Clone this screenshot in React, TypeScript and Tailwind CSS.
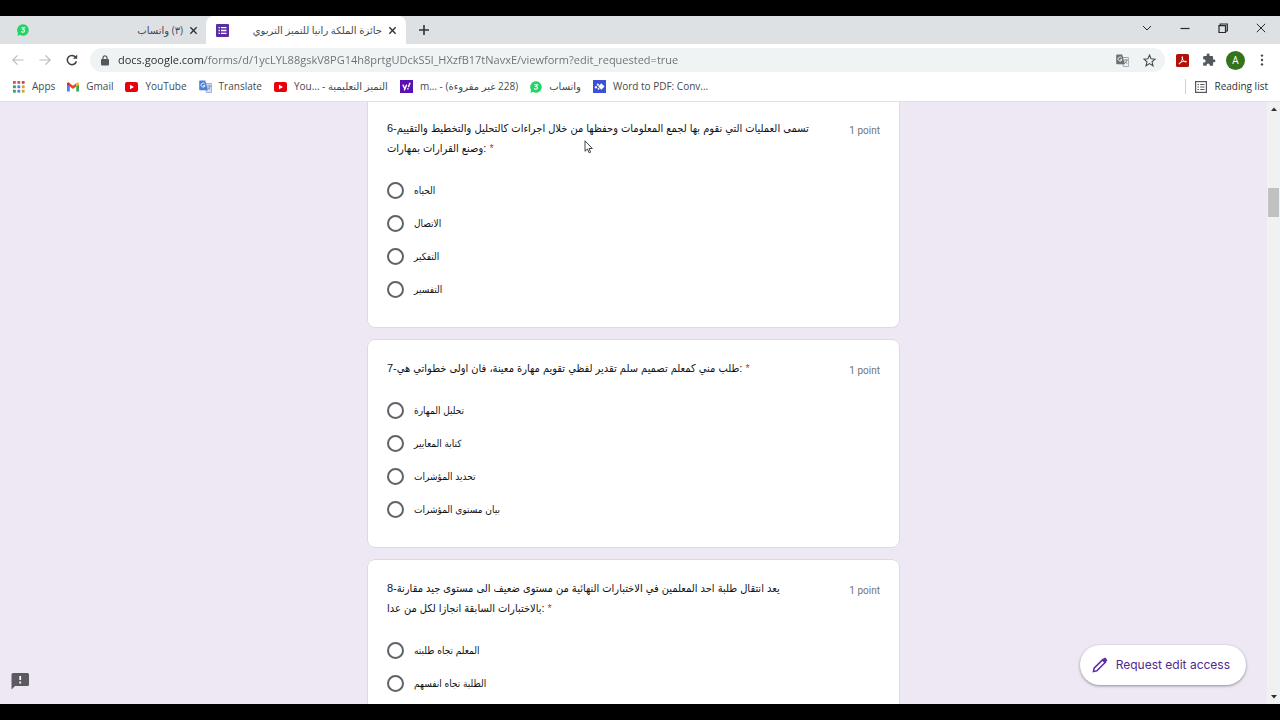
import type { ReactNode } from "react";

function CloseIcon({ className }: { className?: string }) {
  return (
    <svg viewBox="0 0 10 10" className={className} fill="none" stroke="currentColor" strokeWidth="1.5">
      <path d="M1.5 1.5 8.5 8.5M8.5 1.5 1.5 8.5" />
    </svg>
  );
}

function WhatsAppBadge() {
  return (
    <svg viewBox="0 0 12 12" className="size-3 shrink-0">
      <path d="M6 0.2a5.8 5.8 0 1 1-2.8 10.9L0.4 11.8 1 9A5.8 5.8 0 0 1 6 .2z" fill="#25d366" />
      <path d="M4.4 3.7h3L5.8 5.4c1 0 1.7.5 1.7 1.3S6.9 8.2 5.9 8.2c-.8 0-1.4-.3-1.7-.8" fill="none" stroke="#fff" strokeWidth="1.1" />
    </svg>
  );
}

function YouTubeIcon() {
  return (
    <svg viewBox="0 0 13 10" className="h-[10px] w-[13px] shrink-0">
      <rect width="13" height="10" rx="2" fill="#e8000b" />
      <path d="M5 2.8v4.4L9 5z" fill="#fff" />
    </svg>
  );
}

function TranslateIcon({ className, blue, pale }: { className: string; blue: string; pale: string }) {
  return (
    <svg viewBox="0 0 13 13" className={className}>
      <path d="M5 3.5h7a.7.7 0 0 1 .7.7v7.7a.7.7 0 0 1-.7.7H7.5z" fill={pale} stroke={blue} strokeWidth=".6" />
      <path d="M1 .4h5.2L9 10.2H1a.8.8 0 0 1-.8-.8V1.2A.8.8 0 0 1 1 .4z" fill={blue} />
      <path d="M5.7 3.9A2 2 0 1 0 6 5.6H4.2" fill="none" stroke="#fff" strokeWidth=".9" />
      <path d="M8 6h4M10 5v1M11.2 6c-.3 1.6-1.4 2.7-2.4 3.3M9 7.3c.5 1.1 1.4 1.9 2.3 2.3" fill="none" stroke={blue} strokeWidth=".7" />
    </svg>
  );
}

function AppsIcon() {
  const colors = ["#d9534a", "#d9534a", "#c9483f", "#3c9a5a", "#4a86d8", "#d8a02c", "#3c9a5a", "#4a86d8", "#d8a02c"];
  return (
    <svg viewBox="0 0 12 12" className="size-3 shrink-0">
      {colors.map((c, i) => (
        <rect key={i} x={(i % 3) * 4.4} y={Math.floor(i / 3) * 4.4} width="2.8" height="2.8" fill={c} />
      ))}
    </svg>
  );
}

function GmailIcon() {
  return (
    <svg viewBox="0 0 13 10" className="h-[10px] w-3 shrink-0">
      <path d="M0 2v7.3c0 .4.3.7.7.7H3V4.3z" fill="#4285f4" />
      <path d="M10 4.3V10h2.3c.4 0 .7-.3.7-.7V2z" fill="#34a853" />
      <path d="M10 1v3.5l3-2.3V1.5C13 .2 11.5-.4 10.5.4z" fill="#fbbc04" />
      <path d="M3 4.5V1l3.5 2.6L10 1v3.5L6.5 7.2z" fill="#ea4335" />
      <path d="M0 1.5v.7l3 2.3V1L2.5.4C1.5-.4 0 .2 0 1.5z" fill="#c5221f" />
    </svg>
  );
}

function YahooIcon() {
  return (
    <svg viewBox="0 0 14 14" className="size-[13px] shrink-0">
      <rect width="14" height="14" fill="#5a10b0" />
      <path d="M3 5l2 4M7.2 5 4.6 11.2" stroke="#fff" strokeWidth="1.5" fill="none" />
      <path d="M10.8 3 9 7.8" stroke="#fff" strokeWidth="1.6" />
      <circle cx="8.5" cy="9.4" r=".9" fill="#fff" />
    </svg>
  );
}

function WordToPdfIcon() {
  return (
    <svg viewBox="0 0 14 14" className="size-[13px] shrink-0">
      <rect width="14" height="14" fill="#3d50d8" />
      <path d="M9 3.6 12.4 7 9 10.4 5.6 7z" fill="#fff" />
      <path d="M5.3 3.6 6.7 5 5.3 6.4 3.900 5zM3.200 6.200 4.800 7.800 3.200 9.400 1.600 7.800zM6 8.300l1.200 1.200L6 10.700 4.800 9.500z" fill="#fff" />
    </svg>
  );
}

function TabStrip() {
  return (
    <header className="flex h-7 shrink-0 items-stretch bg-[#dde1e4] text-[10px] text-[#45494d]">
      <div className="flex w-[206px] items-center pl-[17px] pr-2">
        <WhatsAppBadge />
        <span dir="rtl" className="ml-auto mr-[6px]">(٣) واتساب</span>
        <button aria-label="Close tab" className="text-[#303336]"><CloseIcon className="size-[9px]" /></button>
      </div>
      <div className="flex w-[200px] items-center rounded-t-lg bg-white pl-[10px] pr-[9px]">
        <svg viewBox="0 0 13 13" className="size-[13px] shrink-0">
          <rect width="13" height="13" rx="1" fill="#5b2da3" />
          <path d="M5 3.7h5.5M5 6.5h5.5M5 9.3h5.5" stroke="#fff" strokeWidth="1.3" />
          <path d="M2.5 3.7h1.4M2.5 6.5h1.4M2.5 9.3h1.4" stroke="#fff" strokeWidth="1.3" />
        </svg>
        <span dir="rtl" className="ml-auto mr-[6px] whitespace-nowrap">جائزة الملكة رانيا للتميز التربوي</span>
        <button aria-label="Close tab" className="text-[#303336]"><CloseIcon className="size-[9px]" /></button>
      </div>
      <button aria-label="New tab" className="ml-3 text-[#303336]">
        <svg viewBox="0 0 12 12" className="size-3" stroke="currentColor" strokeWidth="1.6"><path d="M6 1v10M1 6h10" /></svg>
      </button>
      <div className="ml-auto flex items-center gap-[28px] pb-1 pr-[14px] text-[#26282a]">
        <button aria-label="Search tabs">
          <svg viewBox="0 0 10 10" className="size-[10px]" fill="none" stroke="currentColor"><path d="M1 3l4 4 4-4" /></svg>
        </button>
        <button aria-label="Minimize">
          <svg viewBox="0 0 10 10" className="size-[10px]" stroke="currentColor" strokeWidth="1.2"><path d="M.5 5.5h9" /></svg>
        </button>
        <button aria-label="Restore">
          <svg viewBox="0 0 10 10" className="size-[10px]" fill="none" stroke="currentColor" strokeWidth="1.2"><path d="M1 2.6h6.5v6.9H1zM2.2 2.6V1H9.3v7H7.5" /></svg>
        </button>
        <button aria-label="Close">
          <svg viewBox="0 0 10 10" className="size-[10px]" stroke="currentColor"><path d="M.8.8 9.2 9.2M9.2.8.8 9.2" /></svg>
        </button>
      </div>
    </header>
  );
}

function Toolbar() {
  return (
    <div className="flex h-8 shrink-0 items-center bg-white">
      <nav className="flex w-[90px] items-center gap-[15px] pl-3">
        <button aria-label="Back" className="text-[#b9bbbd]">
          <svg viewBox="0 0 12 12" className="size-3" fill="none" stroke="currentColor" strokeWidth="1.2"><path d="M11.5 6H1M5.5 1.3.8 6l4.7 4.7" /></svg>
        </button>
        <button aria-label="Forward" className="text-[#b9bbbd]">
          <svg viewBox="0 0 12 12" className="size-3" fill="none" stroke="currentColor" strokeWidth="1.2"><path d="M.5 6H11M6.5 1.3 11.2 6l-4.7 4.7" /></svg>
        </button>
        <button aria-label="Reload" className="text-[#3f4245]">
          <svg viewBox="0 0 12 12" className="size-3" fill="none" stroke="currentColor" strokeWidth="1.5"><path d="M10.4 7.2A4.6 4.6 0 1 1 9.6 3.2" /><path d="M11.2.6v4.2H7z" fill="currentColor" stroke="none" /></svg>
        </button>
      </nav>
      <div className="flex h-6 flex-1 items-center rounded-full bg-[#f0f3f4] pl-[11px] pr-[9px]">
        <svg viewBox="0 0 8 11" className="h-[11px] w-2 shrink-0"><rect y="4" width="8" height="6.5" rx="1" fill="#54585c" /><path d="M2 4.5V2.8a2 2 0 0 1 4 0v1.7" fill="none" stroke="#54585c" strokeWidth="1.2" /></svg>
        <input
          aria-label="Address"
          className="ml-[9px] h-5 min-w-0 flex-1 bg-[linear-gradient(to_right,#26282a_86px,#6a6e72_86px)] bg-clip-text text-[11px] leading-5 text-transparent outline-none"
          defaultValue="docs.google.com/forms/d/1ycLYL88gskV8PG14h8prtgUDckS5l_HXzfB17tNavxE/viewform?edit_requested=true"
        />
        <button aria-label="Translate this page"><TranslateIcon className="mr-[14px] size-[13px]" blue="#6b6f73" pale="#f0f3f4" /></button>
        <button aria-label="Bookmark this page">
          <svg viewBox="0 0 24 24" className="size-[13px]" fill="none" stroke="#45494d" strokeWidth="2"><path d="m12 2 2.9 6.9 7.5.6-5.7 4.9 1.8 7.3L12 17.8l-6.5 3.9 1.8-7.3L1.6 9.5l7.5-.6z" /></svg>
        </button>
      </div>
      <div className="flex items-center pl-[11px] pr-4">
        <button aria-label="PDF tools">
          <svg viewBox="0 0 13 13" className="size-[13px]"><rect width="13" height="13" rx="1.5" fill="#b0120a" /><path d="M6.3 2.6C5.5 3.9 7 6.2 8 7.3c1 .9 2.4 1 2.6.4.2-.8-4.7-.6-7.3 1.5-.8.8.1 1.1.8.2C5.3 7.9 7.4 4 6.3 2.6z" fill="none" stroke="#fff" strokeWidth=".9" /></svg>
        </button>
        <button aria-label="Extensions" className="ml-[13px]">
          <svg viewBox="0 0 24 24" className="size-[14px]" fill="#54585c"><path d="M20.5 11H19V7a2 2 0 0 0-2-2h-4V3.5a2.5 2.5 0 0 0-5 0V5H4a2 2 0 0 0-2 2v3.8h1.5a2.7 2.7 0 0 1 0 5.4H2V20a2 2 0 0 0 2 2h3.8v-1.5a2.7 2.7 0 0 1 5.4 0V22H17a2 2 0 0 0 2-2v-4h1.5a2.5 2.5 0 0 0 0-5z" /></svg>
        </button>
        <button className="ml-[10px] size-[19px] rounded-full bg-[#33731c] text-center text-[10px] leading-[19px] text-white">A</button>
        <button aria-label="Menu" className="ml-[15px]">
          <svg viewBox="0 0 4 12" className="h-3 w-1" fill="#45494d"><circle cx="2" cy="1.6" r="1.2" /><circle cx="2" cy="6" r="1.2" /><circle cx="2" cy="10.4" r="1.2" /></svg>
        </button>
      </div>
    </div>
  );
}

function Bookmark({ icon, children }: { icon: ReactNode; children: ReactNode }) {
  return (
    <a href="#" className="flex items-center gap-[7px] whitespace-nowrap">
      {icon}
      <span>{children}</span>
    </a>
  );
}

function BookmarksBar() {
  return (
    <nav className="flex h-[26px] shrink-0 items-center gap-3 border-b border-[#dfe0e3] bg-white pb-1 pl-[13px] pr-3 text-[10px] text-[#45494d]">
      <Bookmark icon={<AppsIcon />}>Apps</Bookmark>
      <Bookmark icon={<GmailIcon />}>Gmail</Bookmark>
      <Bookmark icon={<YouTubeIcon />}>YouTube</Bookmark>
      <Bookmark icon={<TranslateIcon className="size-[13px] shrink-0" blue="#4a80d8" pale="#dfe3e8" />}>Translate</Bookmark>
      <Bookmark icon={<YouTubeIcon />}>You... - <bdi>التميز التعليمية</bdi></Bookmark>
      <Bookmark icon={<YahooIcon />}>m... - <bdi dir="rtl">(228 غير مقروءة)</bdi></Bookmark>
      <Bookmark icon={<WhatsAppBadge />}><bdi>واتساب</bdi></Bookmark>
      <Bookmark icon={<WordToPdfIcon />}>Word to PDF: Conv...</Bookmark>
      <a href="#" className="ml-auto flex items-center gap-[7px] whitespace-nowrap border-l border-[#cfd1d4] pl-[9px] text-[#303336]">
        <svg viewBox="0 0 12 12" className="size-3" fill="none" stroke="#54585c"><rect x=".6" y=".6" width="10.8" height="10.8" strokeWidth="1.2" /><path d="M2.5 3.5H4M2.5 6H4M2.5 8.5H4M5.2 3.5h4.3M5.2 6h4.3M5.2 8.5h4.3" /></svg>
        Reading list
      </a>
    </nav>
  );
}

type Question = { id: string; lines: string[]; options: string[]; continued?: boolean };

const questions: Question[] = [
  {
    id: "q6",
    lines: ["6-تسمى العمليات التي نقوم بها لجمع المعلومات وحفظها من خلال اجراءات كالتحليل والتخطيط والتقييم", "وصنع القرارات بمهارات:"],
    options: ["الحياه", "الاتصال", "التفكير", "التفسير"],
    continued: true,
  },
  {
    id: "q7",
    lines: ["7-طلب مني كمعلم تصميم سلم تقدير لفظي تقويم مهارة معينة، فان اولى خطواتي هي:"],
    options: ["تحليل المهارة", "كتابة المعايير", "تحديد المؤشرات", "بيان مستوى المؤشرات"],
  },
  {
    id: "q8",
    lines: ["8-يعد انتقال طلبة احد المعلمين في الاختبارات النهائية من مستوى ضعيف الى مستوى جيد مقارنة", "بالاختبارات السابقة انجازا لكل من عدا:"],
    options: ["المعلم تجاه طلبته", "الطلبة تجاه انفسهم"],
  },
];

function QuestionCard({ id, lines, options, continued }: Question) {
  return (
    <fieldset
      className={
        continued
          ? "min-w-0 rounded-b-lg border border-t-0 border-[#dcd8e4] bg-white px-[19px] pb-[29px] pt-4"
          : "min-w-0 rounded-lg border border-[#dcd8e4] bg-white px-[19px] pb-[29px] pt-[18px]"
      }
    >
      <div className="flex justify-between">
        <div id={`${id}-text`} className="whitespace-nowrap text-[11px] leading-5 text-[#101114]">
          {lines.map((line, i) => (
            <div key={line} className="h-5">
              {line}
              {i === lines.length - 1 && <span className="text-[#d93025]"> *</span>}
            </div>
          ))}
        </div>
        <span className="h-5 whitespace-nowrap pt-[3px] font-[Roboto,sans-serif] text-[10px] leading-5 text-[#70757a]">1 point</span>
      </div>
      <div role="radiogroup" aria-labelledby={`${id}-text`} className="mt-6 flex flex-col gap-4">
        {options.map((option) => (
          <label key={option} className="flex h-[17px] items-center gap-[10px] text-[10px] text-[#101114]">
            <input type="radio" name={id} className="m-0 size-[17px] appearance-none rounded-full border-2 border-[#5f6368] checked:border-[5px] checked:border-[#673ab7]" />
            <span>{option}</span>
          </label>
        ))}
      </div>
    </fieldset>
  );
}

export default function App() {
  return (
    <div className="flex h-screen flex-col overflow-hidden border-y-16 border-black bg-white font-['Open_Sans','DejaVu_Sans',sans-serif]">
      <TabStrip />
      <Toolbar />
      <BookmarksBar />
      <div className="relative flex min-h-0 flex-1">
        <main className="min-w-0 flex-1 overflow-hidden bg-[#eee8f5]">
          <form className="mx-auto flex w-full max-w-[533px] flex-col gap-[11px] font-['Liberation_Sans','DejaVu_Sans_Condensed','DejaVu_Sans',sans-serif]">
            {questions.map((q) => (
              <QuestionCard key={q.id} {...q} />
            ))}
          </form>
        </main>
        <div aria-hidden="true" className="flex w-[13px] flex-col items-center bg-[#f1f1f1] py-[5px]">
          <svg viewBox="0 0 6 4" className="h-1 w-[6px]"><path d="M0 4h6L3 .5z" fill="#303030" /></svg>
          <div className="mt-[77px] h-[29px] w-[11px] bg-[#c1c1c1]" />
          <svg viewBox="0 0 6 4" className="mt-auto h-1 w-[6px]"><path d="M0 0h6L3 3.5z" fill="#303030" /></svg>
        </div>
        <button className="absolute bottom-[19px] right-[34px] flex h-10 items-center gap-2 rounded-full bg-white pl-3 pr-4 font-['Inter',sans-serif] text-[12px] text-[#4f2a8c] shadow-[0_1px_3px_rgba(0,0,0,0.4)]">
          <svg viewBox="0 0 16 16" className="size-4"><path d="M1.5 14.5l.6-3.3L10.7 2.6l2.7 2.7-8.6 8.6z" fill="none" stroke="#5b2da3" strokeWidth="1.5" /><path d="M9.8 3.3 12 1.1c.5-.5 1.1-.5 1.6 0l1.3 1.3c.5.5.5 1.1 0 1.6l-2.2 2.2z" fill="#5b2da3" /></svg>
          Request edit access
        </button>
        <button aria-label="Report a problem" className="absolute bottom-[14px] left-[11px]">
          <svg viewBox="0 0 18 17" className="h-[17px] w-[18px]"><path d="M2 0h14.5A1.5 1.5 0 0 1 18 1.5v10a1.5 1.5 0 0 1-1.5 1.5H4l-3.5 3.5V1.5A1.5 1.5 0 0 1 2 0z" fill="#5c5a60" /><path d="M9.2 3v4M9.2 8.5v2" stroke="#fff" strokeWidth="1.8" /></svg>
        </button>
        <svg aria-hidden="true" viewBox="0 0 9 14" className="absolute left-[584px] top-[38px] h-[14px] w-[9px]"><path d="M1 .8v10.5L3.4 9l1.7 3.8 1.5-.6L5 8.5h3.3z" fill="#fff" stroke="#303030" strokeWidth=".9" /></svg>
      </div>
    </div>
  );
}
